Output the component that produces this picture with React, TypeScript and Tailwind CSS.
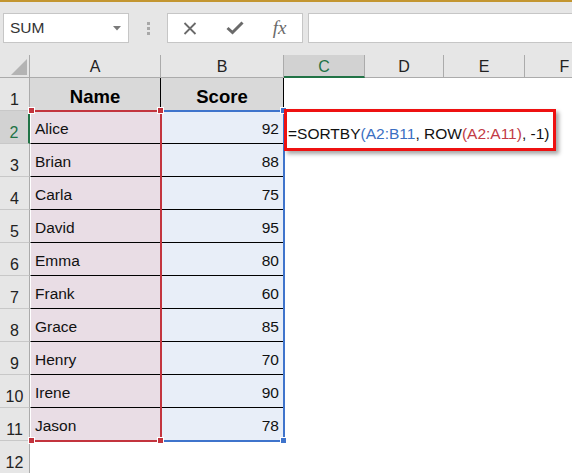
const columns = [
  { label: "A", className: "w-[131px]" },
  { label: "B", className: "w-[123px]" },
  { label: "C", className: "w-[81px]" },
  { label: "D", className: "w-[79px]" },
  { label: "E", className: "w-[81px]" },
  { label: "F", className: "w-[80px]" },
]

const students = [
  { name: "Alice", score: 92 },
  { name: "Brian", score: 88 },
  { name: "Carla", score: 75 },
  { name: "David", score: 95 },
  { name: "Emma", score: 80 },
  { name: "Frank", score: 60 },
  { name: "Grace", score: 85 },
  { name: "Henry", score: 70 },
  { name: "Irene", score: 90 },
  { name: "Jason", score: 78 },
]

function Handle({ className }: { className: string }) {
  return <div className={`absolute w-[7px] h-[7px] border border-white ${className}`} />
}

function FormulaBar() {
  return (
    <div className="h-[55px] bg-[#e6e6e6] border-t-2 border-[#c39631] flex items-start pt-[11px] pl-[3px]">
      <div className="w-[126px] h-[30px] bg-white border border-[#c6c6c6] flex items-center justify-between pl-[6px] pr-[7px] text-[15.5px] text-[#333]">
        <span>SUM</span>
        <svg width="8" height="5" viewBox="0 0 8 5">
          <polygon points="0,0 8,0 4,4.5" fill="#7a7a7a" />
        </svg>
      </div>
      <div className="w-[38px] h-[30px] flex flex-col items-center justify-center gap-[2px]">
        <div className="w-[3px] h-[3px] bg-[#a8a8a8]" />
        <div className="w-[3px] h-[3px] bg-[#a8a8a8]" />
        <div className="w-[3px] h-[3px] bg-[#a8a8a8]" />
      </div>
      <div className="w-[136px] h-[30px] bg-white border border-[#c6c6c6] grid grid-cols-3 items-center">
        <div className="flex justify-center">
          <svg width="14" height="13" viewBox="0 0 14 13">
            <path d="M1.5 1 L12.5 12 M12.5 1 L1.5 12" stroke="#6a6a6a" strokeWidth="1.8" />
          </svg>
        </div>
        <div className="flex justify-center">
          <svg width="18" height="14" viewBox="0 0 18 14">
            <path d="M1.5 7 L6.5 11.5 L16.5 1.5" stroke="#6a6a6a" strokeWidth="3" fill="none" />
          </svg>
        </div>
        <div className="flex justify-center font-['Liberation_Serif',serif] italic text-[19px] leading-none text-[#6a6a6a] pb-[2px]">
          fx
        </div>
      </div>
      <div className="flex-1 ml-[5px] h-[30px] bg-white border border-r-0 border-[#c6c6c6]" />
    </div>
  )
}

function HeaderRow() {
  return (
    <div className="flex h-[23px]">
      <div className="w-[30px] shrink-0 bg-[#e6e6e6] border-r border-b border-[#ababab] flex">
        <svg width="29" height="22" viewBox="0 0 29 22">
          <polygon points="27,4 27,20 11,20" fill="#b4b4b4" />
        </svg>
      </div>
      {columns.map((c) => {
        const selected = c.label === "C"
        return (
          <div
            key={c.label}
            className={`${c.className} shrink-0 border-r border-[#ababab] flex items-center justify-center pt-[2px] text-[16px] ${
              selected
                ? "bg-[#d2d2d2] text-[#217346] border-b-2 border-b-[#217346]"
                : "bg-[#e6e6e6] text-[#222] border-b border-b-[#ababab]"
            }`}
          >
            {c.label}
          </div>
        )
      })}
    </div>
  )
}

function RowHeader({ n }: { n: number }) {
  const selected = n === 2
  return (
    <div
      className={`w-[30px] shrink-0 flex items-end justify-center pb-[2px] leading-none text-[16px] border-b border-b-[#c8c8c8] ${
        selected
          ? "bg-[#d2d2d2] text-[#217346] border-r-2 border-r-[#217346]"
          : "bg-[#e6e6e6] text-[#222] border-r border-r-[#ababab]"
      }`}
    >
      {n}
    </div>
  )
}

function Rows() {
  return (
    <div>
      <div className="flex h-[33px]">
        <RowHeader n={1} />
        <div className="w-[131px] shrink-0 bg-[#d9d9d9] border-r border-black flex items-center justify-center pt-[5px] text-[18.5px] font-bold text-black">
          Name
        </div>
        <div className="w-[123px] shrink-0 bg-[#d9d9d9] border-r border-black flex items-center justify-center pt-[5px] text-[18.5px] font-bold text-black">
          Score
        </div>
      </div>
      {students.map((s, i) => (
        <div key={s.name} className="flex h-[33px] text-[15.5px] text-[#111]">
          <RowHeader n={i + 2} />
          <div className="w-[131px] shrink-0 bg-[#e9dde5] border-b border-black flex items-center pt-[3px] pl-[4px] border-l border-l-white">
            {s.name}
          </div>
          <div className="w-[123px] shrink-0 bg-[#e8eef8] border-b border-black flex items-center justify-end pt-[3px] pr-[5px]">
            {s.score}
          </div>
        </div>
      ))}
      <div className="flex h-[33px]">
        <RowHeader n={12} />
      </div>
    </div>
  )
}

export default function App() {
  return (
    <div className="relative w-[572px] h-[473px] overflow-hidden bg-white font-['Liberation_Sans',Arial,sans-serif]">
      <FormulaBar />
      <div className="w-[605px]">
        <HeaderRow />
        <Rows />
      </div>

      {/* range highlights for the formula references */}
      <div className="absolute left-[160px] top-[110px] w-[125px] h-[332px] border-2 border-l-0 border-[#3f74cc]" />
      <div className="absolute left-[30px] top-[110px] w-[132px] h-[332px] border-2 border-l-0 border-[#c3343e]" />
      <Handle className="left-[28px] top-[107px] bg-[#c3343e]" />
      <Handle className="left-[157px] top-[107px] bg-[#c3343e]" />
      <Handle className="left-[28px] top-[437px] bg-[#c3343e]" />
      <Handle className="left-[157px] top-[437px] bg-[#c3343e]" />
      <Handle className="left-[280px] top-[107px] bg-[#3f74cc]" />
      <Handle className="left-[280px] top-[437px] bg-[#3f74cc]" />

      {/* callout around the formula in C2 */}
      <div className="absolute left-[284px] top-[109px] w-[272px] h-[42px] bg-white border-[3px] border-[#ee1111] shadow-[3px_3px_4px_rgba(0,0,0,0.35)] pt-[12px] pl-[1px] text-[15.5px] leading-[20px] text-[#111] whitespace-nowrap">
        =SORTBY<span className="text-[#3b6fc2]">(A2:B11</span>, ROW
        <span className="text-[#c23b45]">(A2:A11)</span>, -1)
      </div>
    </div>
  )
}
